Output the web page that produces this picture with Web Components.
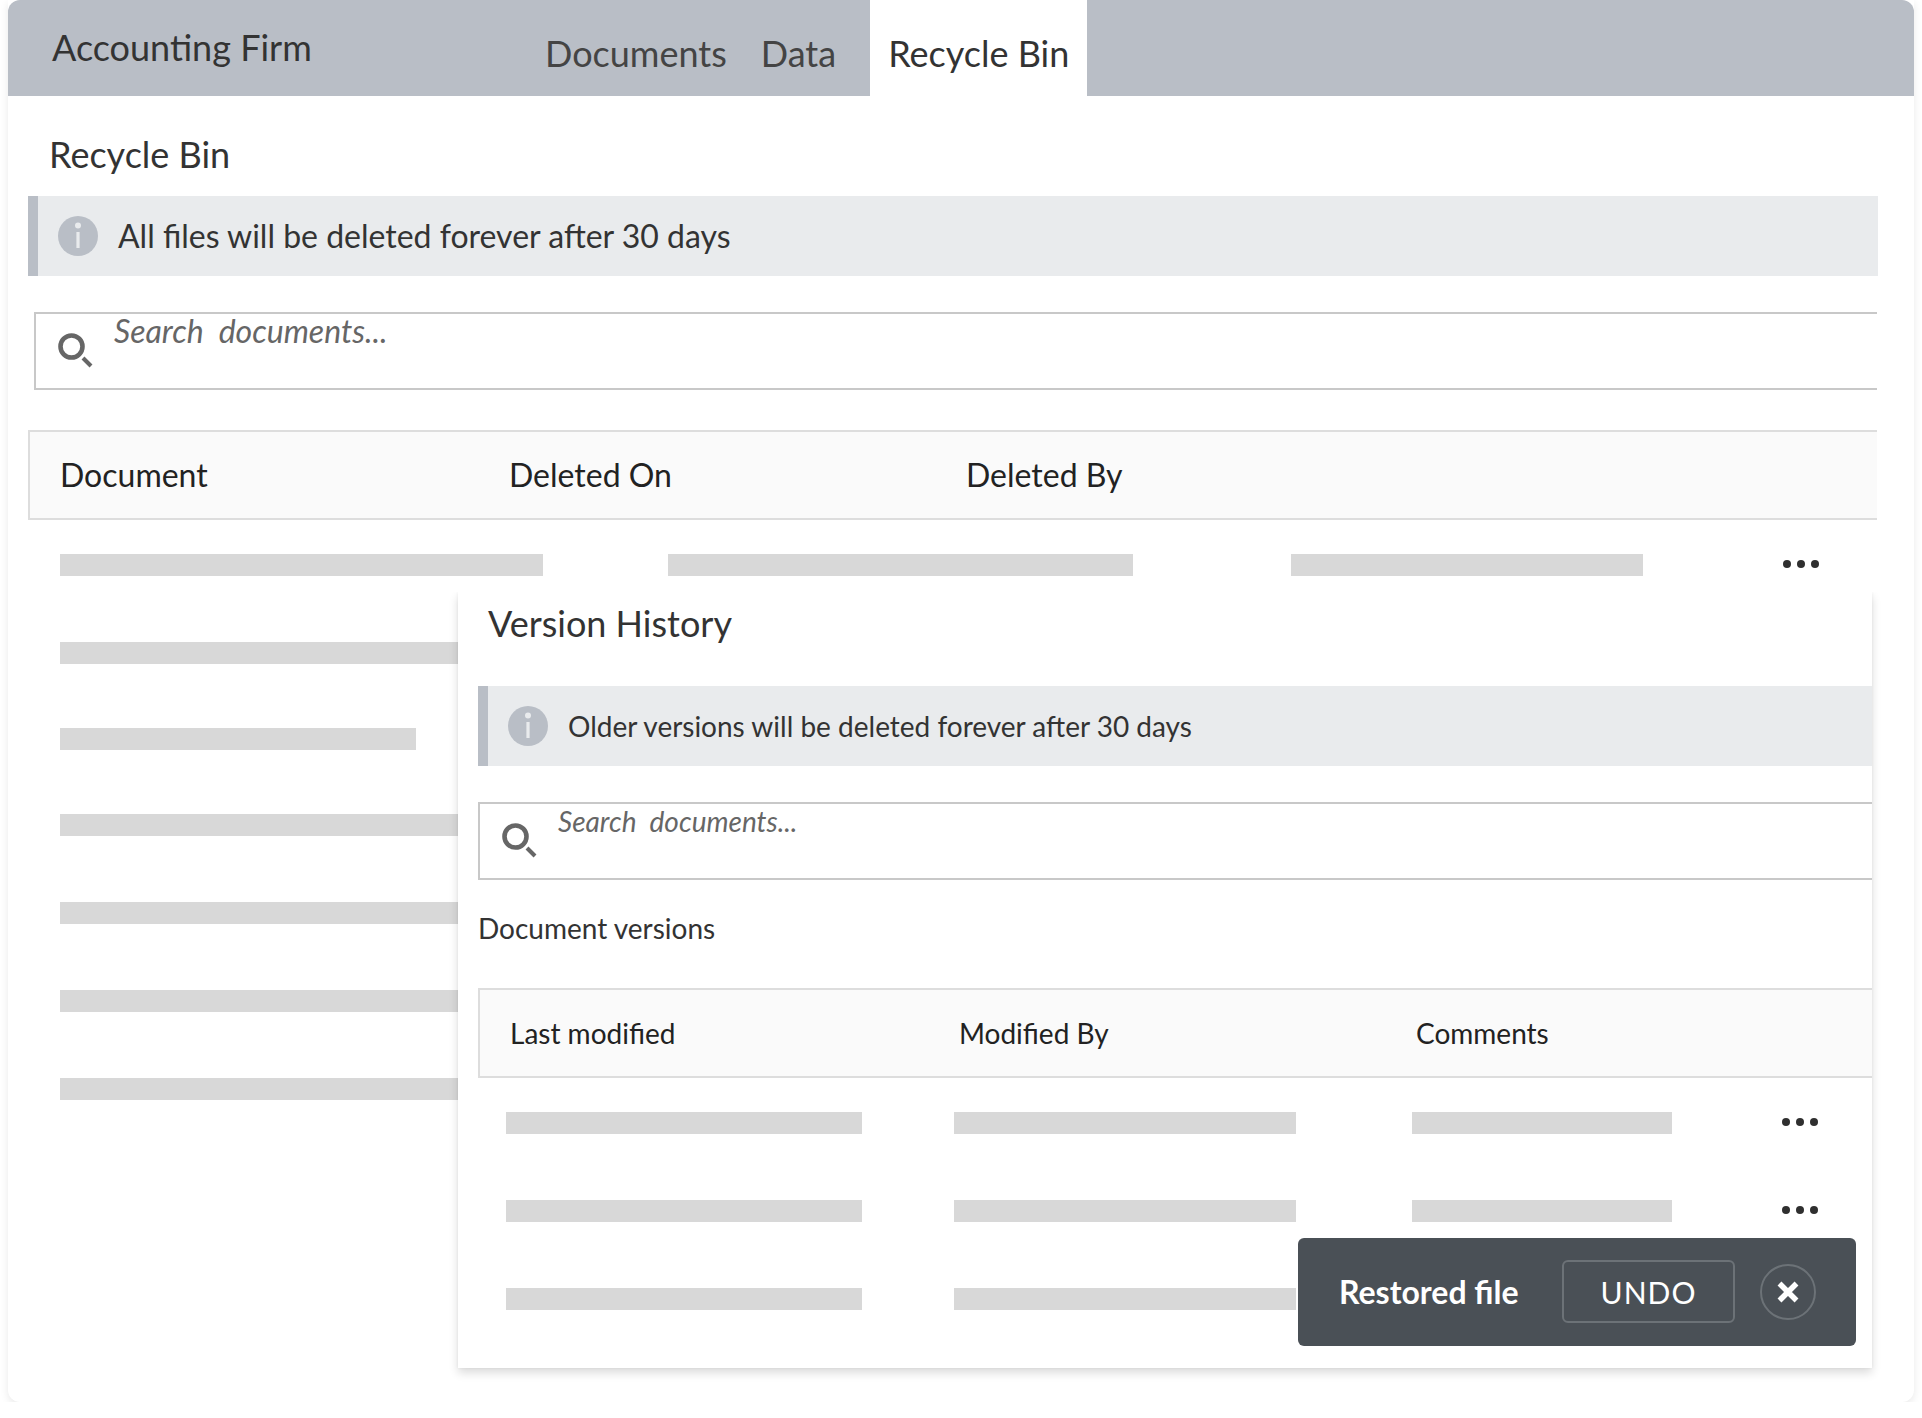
<!DOCTYPE html>
<html lang="en">
<head>
<meta charset="utf-8">
<title>Recycle Bin</title>
<style>
    html, body { margin: 0; background: #fff; }
    body { font-family: Lato, "Open Sans", sans-serif; color: #333; }
</style>
</head>
<body>
<app-window>
    <top-bar slot="bar" heading="Accounting Firm">
        <tab-item style="margin-left:215px">Documents</tab-item>
        <tab-item style="margin-left:34px">Data</tab-item>
        <tab-item active style="margin-left:34px;padding:0 18px">Recycle Bin</tab-item>
    </top-bar>

    <page-title>Recycle Bin</page-title>
    <info-banner>All files will be deleted forever after 30 days</info-banner>
    <search-box style="margin:36px 1px 0 6px">Search  documents...</search-box>
    <table-head style="margin:40px 1px 0 0;--cols:449px 457px 1fr">
        <span>Document</span><span>Deleted On</span><span>Deleted By</span>
    </table-head>

    <skeleton-row style="margin-top:34px;padding-left:32px">
        <skeleton-bar w="483"></skeleton-bar>
        <skeleton-bar w="465" style="margin-left:125px"></skeleton-bar>
        <skeleton-bar w="352" style="margin-left:158px"></skeleton-bar>
        <more-dots style="margin-left:140px"></more-dots>
    </skeleton-row>
    <skeleton-row style="margin-top:66px;padding-left:32px"><skeleton-bar w="400"></skeleton-bar></skeleton-row>
    <skeleton-row style="margin-top:64px;padding-left:32px"><skeleton-bar w="356"></skeleton-bar></skeleton-row>
    <skeleton-row style="margin-top:64px;padding-left:32px"><skeleton-bar w="400"></skeleton-bar></skeleton-row>
    <skeleton-row style="margin-top:66px;padding-left:32px"><skeleton-bar w="400"></skeleton-bar></skeleton-row>
    <skeleton-row style="margin-top:66px;padding-left:32px"><skeleton-bar w="400"></skeleton-bar></skeleton-row>
    <skeleton-row style="margin-top:66px;padding-left:32px"><skeleton-bar w="400"></skeleton-bar></skeleton-row>

    <version-panel slot="overlay">
        <page-title style="margin:11px 0 0 10px;height:40px;font-size:36px">Version History</page-title>
        <info-banner small style="margin-top:43px">Older versions will be deleted forever after 30 days</info-banner>
        <search-box small style="margin-top:36px">Search  documents...</search-box>
        <section-label>Document versions</section-label>
        <table-head small style="margin-top:0;--cols:449px 457px 1fr;padding-left:30px">
            <span>Last modified</span><span>Modified By</span><span>Comments</span>
        </table-head>

        <skeleton-row style="margin-top:34px;padding-left:28px">
            <skeleton-bar w="356"></skeleton-bar>
            <skeleton-bar w="342" style="margin-left:92px"></skeleton-bar>
            <skeleton-bar w="260" style="margin-left:116px"></skeleton-bar>
            <more-dots style="margin-left:110px"></more-dots>
        </skeleton-row>
        <skeleton-row style="margin-top:66px;padding-left:28px">
            <skeleton-bar w="356"></skeleton-bar>
            <skeleton-bar w="342" style="margin-left:92px"></skeleton-bar>
            <skeleton-bar w="260" style="margin-left:116px"></skeleton-bar>
            <more-dots style="margin-left:110px"></more-dots>
        </skeleton-row>
        <skeleton-row style="margin-top:66px;padding-left:28px">
            <skeleton-bar w="356"></skeleton-bar>
            <skeleton-bar w="342" style="margin-left:92px"></skeleton-bar>
        </skeleton-row>

        <undo-toast slot="toast">Restored file</undo-toast>
    </version-panel>
</app-window>

<script>
class AppWindow extends HTMLElement {
    constructor() {
        super();
        this.shadow = this.attachShadow({mode: 'open'});
        this.shadow.innerHTML = `
        <style>
            :host {
                display: block;
                position: relative;
                width: 1906px;
                height: 1402px;
                margin: 0 8px;
                background: #fff;
                border-radius: 0 0 12px 12px;
                box-shadow: 0 3px 8px rgba(0,0,0,.09);
            }
            .content {
                display: flex;
                flex-direction: column;
                padding-left: 20px;
                width: 1850px;
            }
        </style>
        <slot name="bar"></slot>
        <div class="content"><slot></slot></div>
        <slot name="overlay"></slot>
        `;
    }
}

class TopBar extends HTMLElement {
    constructor() {
        super();
        this.shadow = this.attachShadow({mode: 'open'});
        this.shadow.innerHTML = `
        <style>
            :host {
                display: flex;
                height: 96px;
                background: #b9bec6;
                border-radius: 12px 12px 0 0;
                padding-left: 44px;
            }
            h1 {
                margin: 0;
                width: 278px;
                font: 400 36px/96px Lato, sans-serif;
                color: #333;
                position: relative;
                top: -1px;
                white-space: nowrap;
            }
        </style>
        <h1></h1>
        <slot></slot>
        `;
        this.shadow.querySelector('h1').textContent = this.getAttribute('heading');
    }
}

class TabItem extends HTMLElement {
    constructor() {
        super();
        this.shadow = this.attachShadow({mode: 'open'});
        this.shadow.innerHTML = `
        <style>
            :host {
                display: block;
                font: 400 36px/106px Lato, sans-serif;
                color: #444;
                height: 96px;
                white-space: nowrap;
            }
            :host([active]) { background: #fff; color: #333; }
        </style>
        <slot></slot>
        `;
    }
}

class PageTitle extends HTMLElement {
    constructor() {
        super();
        this.shadow = this.attachShadow({mode: 'open'});
        this.shadow.innerHTML = `
        <style>
            :host {
                display: block;
                height: 40px;
                margin: 38px 0 22px 21px;
                font: 400 36px/40px Lato, sans-serif;
                color: #333;
                white-space: nowrap;
            }
        </style>
        <slot></slot>
        `;
    }
}

class InfoBanner extends HTMLElement {
    constructor() {
        super();
        this.shadow = this.attachShadow({mode: 'open'});
        this.shadow.innerHTML = `
        <style>
            :host {
                display: flex;
                align-items: center;
                height: 80px;
                background: #e9ebed;
                border-left: 10px solid #b9bec6;
                padding-left: 20px;
                font: 400 32px/40px Lato, sans-serif;
                color: #333;
                white-space: nowrap;
            }
            :host([small]) { font-size: 28px; }
            svg { width: 40px; height: 40px; margin-right: 20px; flex: none; }
        </style>
        <svg viewBox="0 0 40 40">
            <circle cx="20" cy="20" r="20" fill="#b9bec6"/>
            <circle cx="20" cy="9.5" r="3" fill="#e9ebed"/>
            <rect x="18.4" y="16" width="3.2" height="16" fill="#e9ebed"/>
        </svg>
        <slot></slot>
        `;
    }
}

class SearchBox extends HTMLElement {
    constructor() {
        super();
        this.shadow = this.attachShadow({mode: 'open'});
        this.shadow.innerHTML = `
        <style>
            :host {
                display: flex;
                align-items: center;
                box-sizing: border-box;
                height: 78px;
                border: 2px solid #c8c8c8;
                border-right: 0;
                padding-left: 22px;
                font: italic 400 32px/40px Lato, sans-serif;
                color: #666;
                white-space: pre;
            }
            :host([small]) { font-size: 28px; }
            svg { width: 36px; height: 36px; margin-right: 20px; flex: none; }
        </style>
        <svg viewBox="0 0 36 36" fill="none" stroke="#666">
            <circle cx="13.5" cy="13.5" r="11" stroke-width="4.6"/>
            <path d="M25 25l8 8" stroke-width="4"/>
        </svg>
        <slot></slot>
        `;
    }
}

class TableHead extends HTMLElement {
    constructor() {
        super();
        this.shadow = this.attachShadow({mode: 'open'});
        this.shadow.innerHTML = `
        <style>
            :host {
                display: grid;
                grid-template-columns: var(--cols);
                align-items: center;
                box-sizing: border-box;
                height: 90px;
                background: #fafafa;
                border: 2px solid #ddd;
                border-right: 0;
                padding-left: 30px;
                font: 400 32px/40px Lato, sans-serif;
                color: #222;
                white-space: nowrap;
            }
            :host([small]) { font-size: 28px; }
        </style>
        <slot></slot>
        `;
    }
}

class SectionLabel extends HTMLElement {
    constructor() {
        super();
        this.shadow = this.attachShadow({mode: 'open'});
        this.shadow.innerHTML = `
        <style>
            :host {
                display: block;
                height: 108px;
                padding-top: 28px;
                box-sizing: border-box;
                font: 400 28px/40px Lato, sans-serif;
                color: #333;
            }
        </style>
        <slot></slot>
        `;
    }
}

class SkeletonRow extends HTMLElement {
    constructor() {
        super();
        this.shadow = this.attachShadow({mode: 'open'});
        this.shadow.innerHTML = `
        <style>
            :host { display: flex; align-items: center; height: 22px; }
        </style>
        <slot></slot>
        `;
    }
}

class SkeletonBar extends HTMLElement {
    constructor() {
        super();
        this.shadow = this.attachShadow({mode: 'open'});
        this.shadow.innerHTML = `
        <style>
            :host { display: block; height: 22px; background: #d8d8d8; flex: none; }
        </style>
        `;
        this.style.width = this.getAttribute('w') + 'px';
    }
}

class MoreDots extends HTMLElement {
    constructor() {
        super();
        this.shadow = this.attachShadow({mode: 'open'});
        this.shadow.innerHTML = `
        <style>
            :host { display: flex; gap: 6px; flex: none; margin-top: -2px; }
            i { display: block; width: 8px; height: 8px; border-radius: 50%; background: #2f2f2f; }
        </style>
        <i></i><i></i><i></i>
        `;
    }
}

class VersionPanel extends HTMLElement {
    constructor() {
        super();
        this.shadow = this.attachShadow({mode: 'open'});
        this.shadow.innerHTML = `
        <style>
            :host {
                display: block;
                position: absolute;
                left: 450px;
                top: 592px;
                width: 1414px;
                height: 776px;
                background: #fff;
                box-shadow: 0 5px 9px rgba(0,0,0,.14), 0 0 3px rgba(0,0,0,.06);
                clip-path: inset(0 -20px -20px -20px);
            }
            .inner {
                display: flex;
                flex-direction: column;
                padding-left: 20px;
            }
        </style>
        <div class="inner"><slot></slot></div>
        <slot name="toast"></slot>
        `;
    }
}

class UndoToast extends HTMLElement {
    constructor() {
        super();
        this.shadow = this.attachShadow({mode: 'open'});
        this.shadow.innerHTML = `
        <style>
            :host {
                display: flex;
                align-items: center;
                position: absolute;
                left: 840px;
                top: 646px;
                box-sizing: border-box;
                width: 558px;
                height: 108px;
                padding-left: 41px;
                background: #4a5056;
                border-radius: 6px;
                color: #fff;
                font: 700 32px/40px Lato, sans-serif;
                white-space: nowrap;
            }
            .label { width: 223px; flex: none; }
            .undo {
                display: flex;
                align-items: center;
                justify-content: center;
                box-sizing: border-box;
                width: 173px;
                height: 63px;
                margin-top: -1px;
                border: 2px solid #6c7277;
                border-radius: 6px;
                font: 400 30px/40px Lato, sans-serif;
                letter-spacing: 1px;
            }
            .close {
                display: block;
                width: 56px;
                height: 56px;
                margin-left: 25px;
                margin-top: -1px;
            }
        </style>
        <span class="label"><slot></slot></span>
        <span class="undo">UNDO</span>
        <svg class="close" viewBox="0 0 56 56" fill="none">
            <circle cx="28" cy="28" r="27" stroke="#6c7277" stroke-width="2"/>
            <path d="M19.5 19.5l17 17M36.5 19.5l-17 17" stroke="#fff" stroke-width="5.5"/>
        </svg>
        `;
    }
}

customElements.define('app-window', AppWindow);
customElements.define('top-bar', TopBar);
customElements.define('tab-item', TabItem);
customElements.define('page-title', PageTitle);
customElements.define('info-banner', InfoBanner);
customElements.define('search-box', SearchBox);
customElements.define('table-head', TableHead);
customElements.define('section-label', SectionLabel);
customElements.define('skeleton-row', SkeletonRow);
customElements.define('skeleton-bar', SkeletonBar);
customElements.define('more-dots', MoreDots);
customElements.define('version-panel', VersionPanel);
customElements.define('undo-toast', UndoToast);
</script>
</body>
</html>
